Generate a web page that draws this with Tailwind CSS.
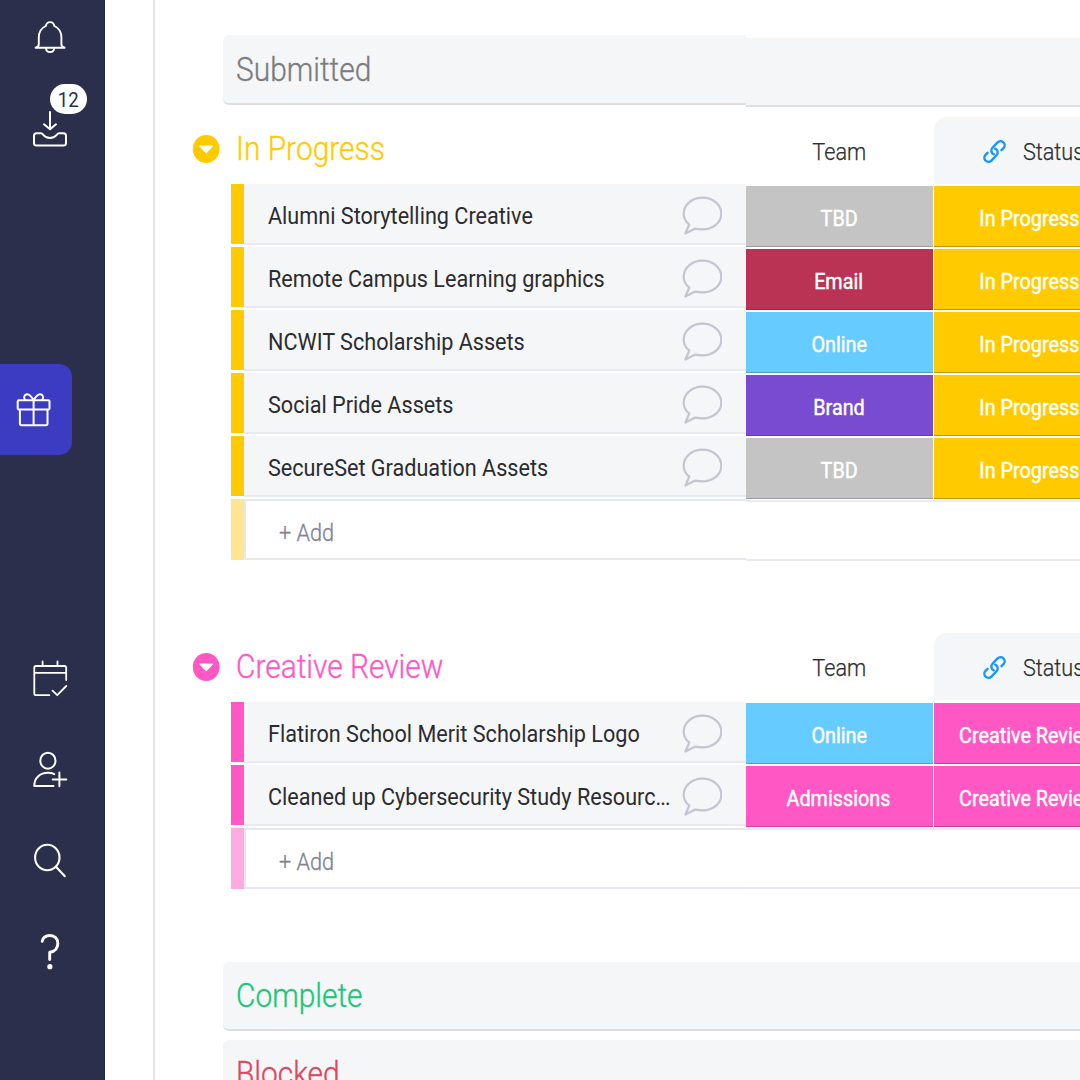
<!DOCTYPE html>
<html lang="en">
<head>
<meta charset="utf-8">
<title>Board</title>
<script src="https://cdn.jsdelivr.net/npm/@tailwindcss/browser@4"></script>
</head>
<body class="font-['Roboto',sans-serif] bg-white">
<div class="flex h-[1080px] w-[1080px] overflow-hidden">

  <!-- Navigation -->
  <nav class="relative h-full w-[105px] shrink-0 bg-[#2b2f4c] pt-[17px] border-r border-[#23284a]">
    <svg class="ml-[30px] block size-10" viewBox="30 17 40 40" fill="none" stroke="#fff" stroke-width="1.9" stroke-linecap="round" stroke-linejoin="round">
      <path d="M35.6 47.8H64.6M36 47.4C38 47 38.8 46 38.8 44V37.500C38.800 32 41.500 28 45.800 26C46.300 23.200 47.800 22.100 50.100 22.100S53.900 23.200 54.400 26C58.700 28 61.400 32 61.400 37.500V44C61.400 46 62.200 47 64.200 47.400"/>
      <path d="M46 48.300C46.300 50.800 47.800 52 50.100 52S53.900 50.800 54.200 48.300"/>
    </svg>
    <div class="relative mt-[53px] ml-[30px] size-10">
      <svg class="block size-10" viewBox="30 110 40 40" fill="none" stroke="#fff" stroke-width="2" stroke-linecap="round" stroke-linejoin="round">
        <path d="M50 112V129M44 124.300L50 129.300L56 124.300"/>
        <path d="M36.500 133.200H41C43.500 133.200 43.500 138 50 138S56.500 133.200 59 133.200H63.500Q66 133.200 66 135.700V143Q66 145.500 63.500 145.500H36.500Q34 145.500 34 143V135.700Q34 133.200 36.500 133.200Z"/>
      </svg>
      <span class="absolute top-[-26px] left-[20px] flex h-[30px] w-[36.500px] items-center justify-center rounded-full bg-white text-[20px] leading-none text-[#2b2f4c]"><span class="mt-0.5 block scale-x-[0.93]">12</span></span>
    </div>
    <div class="mt-[214px] flex h-[91px] w-[71.500px] rounded-r-[13px] bg-[#3b3cc1] pt-[26px] pl-[13px]">
      <svg class="block size-10" viewBox="13 390 40 40" fill="none" stroke="#fff" stroke-width="2" stroke-linecap="round" stroke-linejoin="round">
        <rect x="17.700" y="400.300" width="31.800" height="9.300" rx="1"/>
        <path d="M19.900 410V423.500Q19.900 425.300 21.700 425.300H45.700Q47.500 425.300 47.500 423.500V410M33.600 400V425.300"/>
        <path d="M33.600 399.800C31 396 29.300 393.900 27 394.200C24.300 394.500 23.300 397.500 25 399.800M33.600 399.800C36.200 396 38 393.900 40.300 394.200C43 394.500 44 397.500 42.300 399.800"/>
      </svg>
    </div>
    <svg class="mt-[203px] ml-[30px] block size-10" viewBox="30 658 40 40" fill="none" stroke="#fff" stroke-width="1.800" stroke-linecap="round" stroke-linejoin="round">
      <path d="M49.300 695.200H36Q34.300 695.200 34.300 693.500V667.700Q34.300 666 36 666H64.500Q66.200 666 66.200 667.700V680M34.300 672.900H66.200M42.600 661.500V666M57.500 661.500V666M52.500 690.600L57.200 695.200L66.300 686"/>
    </svg>
    <svg class="mt-[52px] ml-[30px] block size-10" viewBox="30 750 40 40" fill="none" stroke="#fff" stroke-width="2" stroke-linecap="round" stroke-linejoin="round">
      <ellipse cx="47.900" cy="760.700" rx="7.600" ry="8"/>
      <path d="M53.500 786H34.300C34 778 40 772.800 48 772.800Q51.500 772.800 54.300 774.100M52.700 779.400H66.300M59.400 772.400V786.200"/>
    </svg>
    <svg class="mt-[50px] ml-[30px] block size-10" viewBox="30 840 40 40" fill="none" stroke="#fff" stroke-width="2.100" stroke-linecap="round">
      <ellipse cx="47.300" cy="857.500" rx="12.200" ry="12.800"/><path d="M56.200 867L64.800 876.200"/>
    </svg>
    <svg class="mt-[51px] ml-[30px] block size-10" viewBox="30 931 40 40" fill="none" stroke="#fff" stroke-width="2.900" stroke-linecap="round" stroke-linejoin="round">
      <path d="M42.200 941.300C43 937.500 46 935.500 50 935.500C55 935.500 57.800 939 57.800 943.500C57.800 948.500 55 951.500 49.700 952.300V959.500"/><circle cx="49.900" cy="966.700" r="2.600" fill="#fff" stroke="none"/>
    </svg>
  </nav>

  <main class="ml-[48px] flex flex-1 overflow-hidden border-l-2 border-[#e4e4e6]">
    <!-- Item names -->
    <div class="w-[591px] shrink-0 pt-[35px]" id="names"></div>
    <!-- Columns -->
    <div class="w-[334px] shrink-0 pt-[38px]" id="columns"></div>
  </main>
</div>

<script>
const bar = (name, color, height, leading) => `
  <div class="ml-[68px] flex ${height} rounded-l-[6px] border-b-2 border-[#dcdfe2] bg-[#f5f6f8] pl-[13px]">
    <span class="block h-[66px] origin-left scale-x-[0.906] text-[33px] ${leading} font-light whitespace-nowrap [-webkit-text-stroke:0.35px] ${color}">${name}</span>
  </div>`;
const title = (name, color, pad) => `
  <div class="flex ${pad} pl-[37px] ${color}">
    <svg class="mt-[4.500px] block h-[30px] w-[28px] shrink-0" viewBox="0 0 28 30"><ellipse cx="14.200" cy="15" rx="13.400" ry="14.100" fill="currentColor"/><path d="M8 12H20.400L14.200 18.700Z" fill="#fff" stroke="#fff" stroke-width="1.200" stroke-linejoin="round"/></svg>
    <span class="ml-[16px] block h-10 origin-left scale-x-[0.906] text-[33px] leading-[40px] font-light whitespace-nowrap [-webkit-text-stroke:0.35px]">${name}</span>
  </div>`;
const item = (name, color) => `
  <div class="ml-[76px] flex h-[63px] items-start">
    <div class="h-[60px] w-[13px] shrink-0 ${color}"></div>
    <div class="flex h-[61px] flex-1 items-start border-b-2 border-[#e8eaf1] bg-[#f5f6f8] pl-[23.500px]">
      <span class="block h-[59px] w-[417.500px] origin-left scale-x-[0.92] text-[23.500px] leading-[65px] whitespace-nowrap text-[#2b2c30]">${name}</span>
      <svg class="mt-3 -ml-[3px] block size-10 shrink-0" viewBox="0 0 40 40" fill="none" stroke="#c3c5d0" stroke-width="2.200" stroke-linejoin="round"><path d="M7.300 28.500C3.500 25.700 1.700 22 1.700 17.700C1.700 8.800 10 1.700 20.500 1.700S39.300 8.800 39.300 17.700S31 33.300 20.500 33.300C17.600 33.300 15.500 33 13.200 32.600L3.400 37.500Z"/></svg>
    </div>
  </div>`;
const add = (color) => `
  <div class="ml-[76px] flex h-[61px]">
    <div class="w-[13px] shrink-0 ${color}"></div>
    <div class="flex-1 border-t-2 border-b-2 border-l-2 border-[#e6e8f0] pl-[33px]">
      <span class="block h-[57px] origin-left scale-x-[0.92] text-[23.500px] leading-[65px] font-light text-[#7f8290] [-webkit-text-stroke:0.3px]">+ Add</span>
    </div>
  </div>`;

names.innerHTML =
  bar('Submitted', 'text-[#7c7c7c]', 'h-[70px]', 'leading-[69px]') +
  title('In Progress', 'text-[#ffcb00]', 'h-[79px] pt-[24px]') +
  ['Alumni Storytelling Creative', 'Remote Campus Learning graphics', 'NCWIT Scholarship Assets', 'Social Pride Assets', 'SecureSet Graduation Assets'].map(n => item(n, 'bg-[#ffcb00]')).join('') +
  add('bg-[#ffe58f]') +
  title('Creative Review', 'text-[#ff58c4]', 'h-[142px] pt-[87px]') +
  ['Flatiron School Merit Scholarship Logo', 'Cleaned up Cybersecurity Study Resourc<span class="tracking-[-1px]">...</span>'].map(n => item(n, 'bg-[#ff58c4]')).join('') +
  add('bg-[#ffabe1]') +
  '<div class="h-[73px]"></div>' +
  bar('Complete', 'text-[#17c878]', 'h-[69px]', 'leading-[67px]') +
  '<div class="h-[9px]"></div>' +
  bar('Blocked', 'text-[#e2445c]', 'h-[70px]', 'leading-[67px]');

const strip = (size) => `<div class="${size} border-b-2 border-[#dcdfe2] bg-[#f5f6f8]"></div>`;
const head = (size) => `
  <div class="flex ${size} text-[23.500px] font-light text-[#2c2d30] [-webkit-text-stroke:0.25px]">
    <div class="flex w-[186px] shrink-0 justify-center leading-[71px]"><span class="block scale-x-[0.92]">Team</span></div>
    <div class="ml-[2px] flex h-[67px] w-[160px] shrink-0 rounded-tl-[13px] bg-[#f5f6f8] pl-[47px] leading-[71px]">
      <svg class="mt-[21px] block size-[27px] shrink-0" viewBox="-13.500 -13.500 27 27" fill="none" stroke="#1b95f8" stroke-width="2.400" stroke-linecap="round"><g transform="rotate(-46)"><path d="M5.800 4.100H8.700A4.100 4.100 0 0 0 8.700 -4.100H1.300A4.100 4.100 0 0 0 -2.500 1.500"/><path d="M-5.800 -4.100H-8.700A4.100 4.100 0 0 0 -8.700 4.100H-1.300A4.100 4.100 0 0 0 2.500 -1.500"/></g></svg>
      <span class="ml-[14.500px] block origin-left scale-x-[0.92]">Status</span>
    </div>
  </div>`;
const cells = (team, teamColor, status, statusColor) => `
  <div class="flex h-[63px] gap-[1.500px] text-[21.500px] leading-[66px] text-white [-webkit-text-stroke:0.45px]">
    <div class="flex h-[61px] w-[186.500px] shrink-0 justify-center border-b border-black/20 pr-[1px] ${teamColor}"><span class="block scale-x-[0.92]">${team}</span></div>
    <div class="flex h-[61px] w-[190px] shrink-0 justify-center border-b border-black/25 ${statusColor}"><span class="block scale-x-[0.92] whitespace-nowrap">${status}</span></div>
  </div>`;
const line = (size) => `<div class="${size} border-t-2 border-b-2 border-[#e9ebf2]"></div>`;
const progress = (t, c) => cells(t, c, 'In Progress', 'bg-[#ffcb00]');
const review = (t, c) => cells(t, c, 'Creative Review', 'bg-[#ff58c4]');

columns.innerHTML =
  strip('h-[69px]') + '<div class="h-[10px]"></div>' +
  head('h-[69px]') +
  progress('TBD', 'bg-[#c4c4c4]') + progress('Email', 'bg-[#bb3354]') + progress('Online', 'bg-[#66ccff]') + progress('Brand', 'bg-[#784bd1]') + progress('TBD', 'bg-[#c4c4c4]') +
  line('-mt-[1px] h-[61px]') + '<div class="h-[72px]"></div>' +
  head('h-[70px]') +
  review('Online', 'bg-[#66ccff]') + review('Admissions', 'bg-[#ff58c4]') +
  line('-mt-[1px] h-[61px]') + '<div class="h-[73px]"></div>' +
  strip('h-[69px]') + '<div class="h-[9px]"></div>' + strip('h-[70px]');
</script>
</body>
</html>
